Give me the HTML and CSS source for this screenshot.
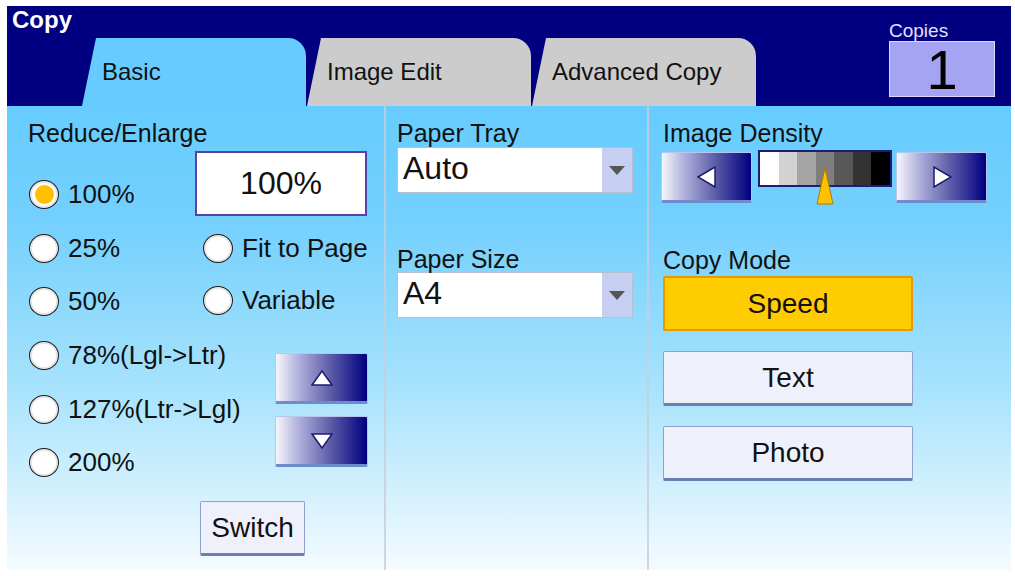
FILE: index.html
```html
<!DOCTYPE html>
<html lang="en">
<head>
  <meta charset="UTF-8">
  <title>Copy</title>
  <link rel="stylesheet" href="styles.css">
</head>
<body>
  <div class="panel">
    <header class="top">
      <div class="top-left">
        <div class="title">Copy</div>
        <nav class="tabs">
          <div class="tab active">Basic</div>
          <div class="tab">Image Edit</div>
          <div class="tab">Advanced Copy</div>
        </nav>
      </div>
      <div class="copies">
        <div class="copies-label">Copies</div>
        <div class="copies-count">1</div>
      </div>
    </header>

    <main class="body">
      <!-- reduce / enlarge -->
      <section class="col col-ratio">
        <div class="label">Reduce/Enlarge</div>
        <div class="ratio-grid">
          <div class="ratio-presets">
            <div class="radio on"><span class="dot"></span>100%</div>
            <div class="radio"><span class="dot"></span>25%</div>
            <div class="radio"><span class="dot"></span>50%</div>
            <div class="radio"><span class="dot"></span>78%(Lgl-&gt;Ltr)</div>
            <div class="radio"><span class="dot"></span>127%(Ltr-&gt;Lgl)</div>
            <div class="radio"><span class="dot"></span>200%</div>
          </div>
          <div class="ratio-side">
            <div class="ratio-value">100%</div>
            <div class="radio"><span class="dot"></span>Fit to Page</div>
            <div class="radio"><span class="dot"></span>Variable</div>
            <div class="steppers">
              <div class="arrow-btn">
                <svg width="22" height="16" viewBox="0 0 22 16"><polygon points="11,1 21,15 1,15" fill="#fff" stroke="#1c1c6c" stroke-width="1.5"/></svg>
              </div>
              <div class="arrow-btn">
                <svg width="22" height="16" viewBox="0 0 22 16"><polygon points="1,1 21,1 11,15" fill="#fff" stroke="#1c1c6c" stroke-width="1.5"/></svg>
              </div>
            </div>
            <button class="btn switch">Switch</button>
          </div>
        </div>
      </section>

      <!-- paper -->
      <section class="col col-paper">
        <div class="label">Paper Tray</div>
        <div class="select">
          <div class="select-value">Auto</div>
          <div class="select-arrow">
            <svg width="16" height="9" viewBox="0 0 16 9"><polygon points="0,0 16,0 8,9" fill="#555"/></svg>
          </div>
        </div>
        <div class="label label-gap">Paper Size</div>
        <div class="select">
          <div class="select-value">A4</div>
          <div class="select-arrow">
            <svg width="16" height="9" viewBox="0 0 16 9"><polygon points="0,0 16,0 8,9" fill="#555"/></svg>
          </div>
        </div>
      </section>

      <!-- density and mode -->
      <section class="col col-mode">
        <div class="label">Image Density</div>
        <div class="density">
          <div class="arrow-btn">
            <svg width="20" height="22" viewBox="0 0 20 22"><polygon points="1,11 18,1 18,21" fill="#fff" stroke="#1c1c6c" stroke-width="1.5"/></svg>
          </div>
          <div class="scale">
            <div class="scale-bar">
              <span style="background:#ffffff"></span>
              <span style="background:#d2d2d2"></span>
              <span style="background:#a4a4a4"></span>
              <span style="background:#7e7e7e"></span>
              <span style="background:#585858"></span>
              <span style="background:#333333"></span>
              <span style="background:#000000"></span>
            </div>
            <svg class="pointer" width="18" height="38" viewBox="0 0 18 38"><polygon points="9,1 17,37 1,37" fill="#ffc200" stroke="#b07a00" stroke-width="1"/></svg>
          </div>
          <div class="arrow-btn">
            <svg width="20" height="22" viewBox="0 0 20 22"><polygon points="19,11 2,1 2,21" fill="#fff" stroke="#1c1c6c" stroke-width="1.5"/></svg>
          </div>
        </div>
        <div class="label label-mode">Copy Mode</div>
        <button class="btn mode-btn on">Speed</button>
        <button class="btn mode-btn">Text</button>
        <button class="btn mode-btn">Photo</button>
      </section>
    </main>
  </div>
</body>
</html>
```

FILE: styles.css
```css
body {
  margin: 6px 0 0 7px;
  background: #fff;
  font-family: "Liberation Sans", Arial, sans-serif;
  color: #111;
}

.panel {
  width: 1004px;
  height: 564px;
  display: flex;
  flex-direction: column;
}

/* header bar */
.top {
  flex: none;
  height: 100px;
  background: #000080;
  display: flex;
  justify-content: space-between;
}

.title {
  color: #fff;
  font-weight: bold;
  font-size: 24px;
  line-height: 28px;
  padding-left: 5px;
}

.tabs {
  display: flex;
  gap: 1px;
  height: 68px;
  margin: 4px 0 0 75px;
}

.tab {
  width: 224px;
  box-sizing: border-box;
  padding-left: 20px;
  display: flex;
  align-items: center;
  background: #cccccc;
  border-top-right-radius: 18px;
  clip-path: polygon(14px 0, 100% 0, 100% 100%, 0 100%);
  font-size: 24px;
}

.tab.active {
  background: #66ccff;
}

.copies {
  margin-right: 16px;
  padding-top: 14px;
}

.copies-label {
  color: #e2e2ff;
  font-size: 19px;
  line-height: 21px;
}

.copies-count {
  width: 106px;
  height: 56px;
  box-sizing: border-box;
  background: #a4a4f2;
  border: 1px solid #d8d8ff;
  color: #000;
  font-size: 56px;
  line-height: 56px;
  text-align: center;
}

/* main area */
.body {
  flex: 1;
  display: flex;
  background: linear-gradient(#66ccff 0%, #74d0fd 25%, #a6e2fc 60%, #f4fbff 100%);
}

.col {
  box-sizing: border-box;
  padding-top: 14px;
}

.col-ratio {
  width: 377px;
  padding-left: 21px;
}

.col-paper {
  width: 263px;
  padding-left: 11px;
  border-left: 2px solid rgba(200, 205, 215, 0.8);
}

.col-mode {
  flex: 1;
  padding-left: 14px;
  border-left: 2px solid rgba(200, 205, 215, 0.8);
}

.label {
  font-size: 25px;
  line-height: 26px;
  white-space: nowrap;
}

/* radios */
.ratio-grid {
  display: flex;
}

.ratio-presets {
  width: 166px;
  padding: 22px 0 0 1px;
}

.radio {
  display: flex;
  align-items: center;
  gap: 9px;
  font-size: 26px;
  white-space: nowrap;
}

.ratio-presets .radio {
  height: 53.6px;
}

.ratio-side .radio {
  height: 52px;
  padding-left: 8px;
}

.dot {
  flex: none;
  width: 30px;
  height: 29px;
  box-sizing: border-box;
  border-radius: 50%;
  border: 1.5px solid #1a1a1a;
  background: #fff;
  box-shadow: inset 0 0 0 2px #e6e6e6;
  display: flex;
  align-items: center;
  justify-content: center;
}

.radio.on .dot::after {
  content: "";
  width: 19px;
  height: 19px;
  border-radius: 50%;
  background: #ffc000;
}

.ratio-side {
  padding-top: 5px;
}

.ratio-value {
  width: 172px;
  height: 65px;
  box-sizing: border-box;
  margin-bottom: 6px;
  border: 2px solid #5a40a8;
  background: #fff;
  font-size: 32px;
  display: flex;
  align-items: center;
  justify-content: center;
}

.steppers {
  display: flex;
  flex-direction: column;
  gap: 12px;
  margin: 27px 0 0 80px;
}

.arrow-btn {
  width: 93px;
  height: 51px;
  box-sizing: border-box;
  background: linear-gradient(to right, #f6f6fc 0%, #b0b0dc 25%, #5c5ca8 60%, #000080 100%);
  border: 1px solid #b8c6ec;
  border-bottom: 3px solid #6c8ccc;
  border-radius: 2px;
  display: flex;
  align-items: center;
  justify-content: center;
}

/* plain buttons */
.btn {
  box-sizing: border-box;
  padding: 0;
  background: #eef0fc;
  border: 1px solid #8ea0cc;
  border-bottom: 3px solid #6b7eb0;
  border-radius: 2px;
  color: #111;
  font-family: inherit;
  font-size: 28px;
}

.switch {
  display: block;
  width: 105px;
  height: 55px;
  margin: 34px 0 0 5px;
}

/* paper selects */
.select {
  width: 236px;
  height: 46px;
  box-sizing: border-box;
  margin-top: 1px;
  display: flex;
  background: #fff;
  border: 1px solid #b8c0d0;
  font-size: 32px;
}

.select-value {
  flex: 1;
  padding-left: 5px;
  line-height: 40px;
}

.select-arrow {
  width: 30px;
  background: #c6cef2;
  display: flex;
  align-items: center;
  justify-content: center;
}

.label-gap {
  margin-top: 53px;
}

.col-paper .label-gap + .select {
  margin-top: 0;
}

/* density */
.density {
  display: flex;
  align-items: flex-start;
  margin: 4px 0 0 -2px;
}

.density .arrow-btn {
  width: 91px;
  margin-top: 2px;
}

.scale {
  position: relative;
  margin: 0 4px 0 6px;
}

.scale-bar {
  display: flex;
  width: 134px;
  height: 37px;
  box-sizing: border-box;
  border: 2px solid #1c1c7c;
}

.scale-bar span {
  flex: 1;
}

.pointer {
  position: absolute;
  left: 58px;
  top: 17px;
}

.label-mode {
  margin-top: 44px;
}

.mode-btn {
  display: block;
  width: 250px;
  height: 55px;
  margin-top: 20px;
}

.label-mode + .mode-btn {
  margin-top: 3px;
}

.mode-btn.on {
  background: #ffcc00;
  border: 2px solid #e49a00;
}
```
